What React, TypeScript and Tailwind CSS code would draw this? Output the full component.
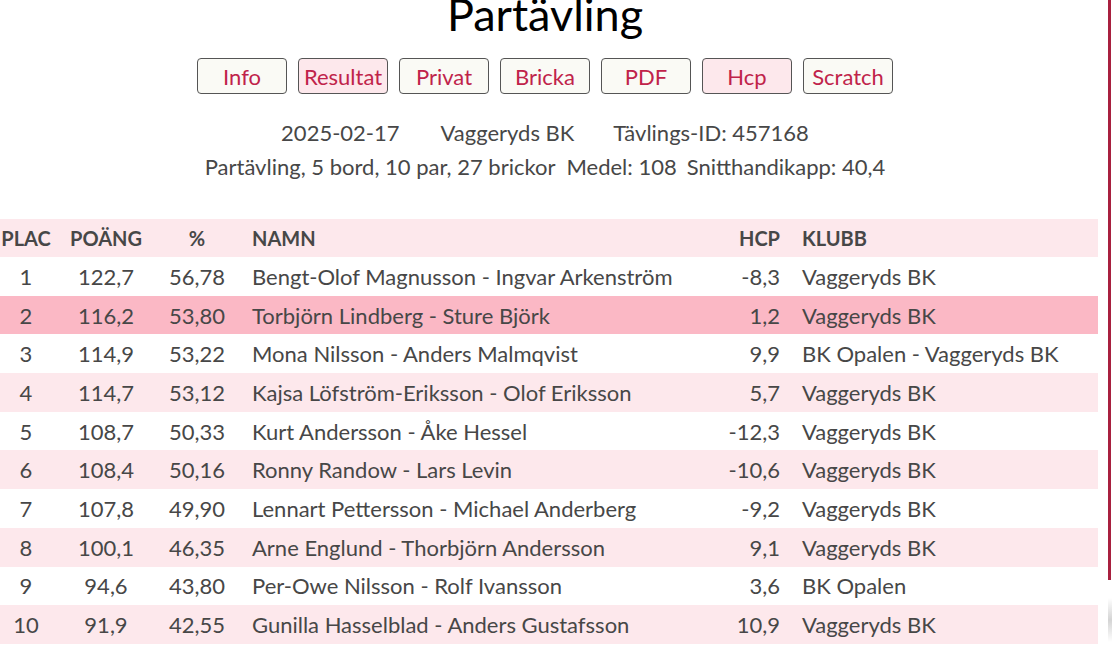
import React from 'react';

const buttons = [
    { label: "Info", active: false },
    { label: "Resultat", active: true },
    { label: "Privat", active: false },
    { label: "Bricka", active: false },
    { label: "PDF", active: false },
    { label: "Hcp", active: true },
    { label: "Scratch", active: false },
];

const rows = [
    ["1", "122,7", "56,78", "Bengt-Olof Magnusson - Ingvar Arkenström", "-8,3", "Vaggeryds BK"],
    ["2", "116,2", "53,80", "Torbjörn Lindberg - Sture Björk", "1,2", "Vaggeryds BK"],
    ["3", "114,9", "53,22", "Mona Nilsson - Anders Malmqvist", "9,9", "BK Opalen - Vaggeryds BK"],
    ["4", "114,7", "53,12", "Kajsa Löfström-Eriksson - Olof Eriksson", "5,7", "Vaggeryds BK"],
    ["5", "108,7", "50,33", "Kurt Andersson - Åke Hessel", "-12,3", "Vaggeryds BK"],
    ["6", "108,4", "50,16", "Ronny Randow - Lars Levin", "-10,6", "Vaggeryds BK"],
    ["7", "107,8", "49,90", "Lennart Pettersson - Michael Anderberg", "-9,2", "Vaggeryds BK"],
    ["8", "100,1", "46,35", "Arne Englund - Thorbjörn Andersson", "9,1", "Vaggeryds BK"],
    ["9", "94,6", "43,80", "Per-Owe Nilsson - Rolf Ivansson", "3,6", "BK Opalen"],
    ["10", "91,9", "42,55", "Gunilla Hasselblad - Anders Gustafsson", "10,9", "Vaggeryds BK"],
];

export default function App() {
    return (
        <div className="relative h-[658px] w-[1112px] overflow-hidden bg-white text-[#474747] font-['Lato',_'Noto_Sans',_sans-serif]">
            {/* crimson edge bar */}
            <div className="absolute right-[1px] top-0 h-[580px] w-[3px] bg-[#a8203f]"></div>
            <div className="absolute right-0 top-[598px] h-[44px] w-[4px] bg-gradient-to-b from-white via-[#d4d4d4] to-white"></div>

            <div className="w-[1090px]">
                <h1 className="mt-[-14px] text-center text-[45px] leading-[56px] font-normal text-black">Partävling</h1>

                <div className="mt-[16px] flex justify-center gap-[11px]">
                    {buttons.map(b => (
                        <div
                            key={b.label}
                            className={`flex h-[36px] w-[90px] items-center justify-center rounded-[4px] border border-[#555] text-[22px] text-[#c0234a] ${b.active ? 'bg-[#fde8ec]' : 'bg-[#fafaf5]'}`}
                        >
                            {b.label}
                        </div>
                    ))}
                </div>

                <div className="mt-[22px] flex justify-center text-[22px] leading-[34px]">
                    <span>2025-02-17</span>
                    <span className="ml-[41px]">Vaggeryds BK</span>
                    <span className="ml-[39px]">Tävlings-ID: 457168</span>
                </div>
                <div className="flex justify-center text-[22px] leading-[34px]">
                    <span>Partävling, 5 bord, 10 par, 27 brickor</span>
                    <span className="ml-[11px]">Medel: 108</span>
                    <span className="ml-[10px]">Snitthandikapp: 40,4</span>
                </div>
            </div>

            <table className="mt-[35px] w-[1098px] table-fixed border-collapse text-[22px]">
                <colgroup>
                    <col className="w-[52px]" />
                    <col className="w-[108px]" />
                    <col className="w-[74px]" />
                    <col className="w-[466px]" />
                    <col className="w-[80px]" />
                    <col />
                </colgroup>
                <thead>
                    <tr className="h-[38px] bg-[#fde8ec] text-[20px]">
                        <th className="text-center font-bold">PLAC</th>
                        <th className="text-center font-bold">POÄNG</th>
                        <th className="text-center font-bold">%</th>
                        <th className="pl-[18px] text-left font-bold">NAMN</th>
                        <th className="text-right font-bold">HCP</th>
                        <th className="pl-[22px] text-left font-bold">KLUBB</th>
                    </tr>
                </thead>
                <tbody>
                    {rows.map((r, i) => (
                        <tr
                            key={r[0]}
                            className={`h-[38.7px] ${i === 1 ? 'bg-[#fbb8c5]' : i % 2 === 1 ? 'bg-[#fde8ec]' : 'bg-white'}`}
                        >
                            <td className="text-center">{r[0]}</td>
                            <td className="text-center">{r[1]}</td>
                            <td className="text-center">{r[2]}</td>
                            <td className="pl-[18px] whitespace-nowrap">{r[3]}</td>
                            <td className="text-right">{r[4]}</td>
                            <td className="pl-[22px] whitespace-nowrap">{r[5]}</td>
                        </tr>
                    ))}
                </tbody>
            </table>
        </div>
    );
}
